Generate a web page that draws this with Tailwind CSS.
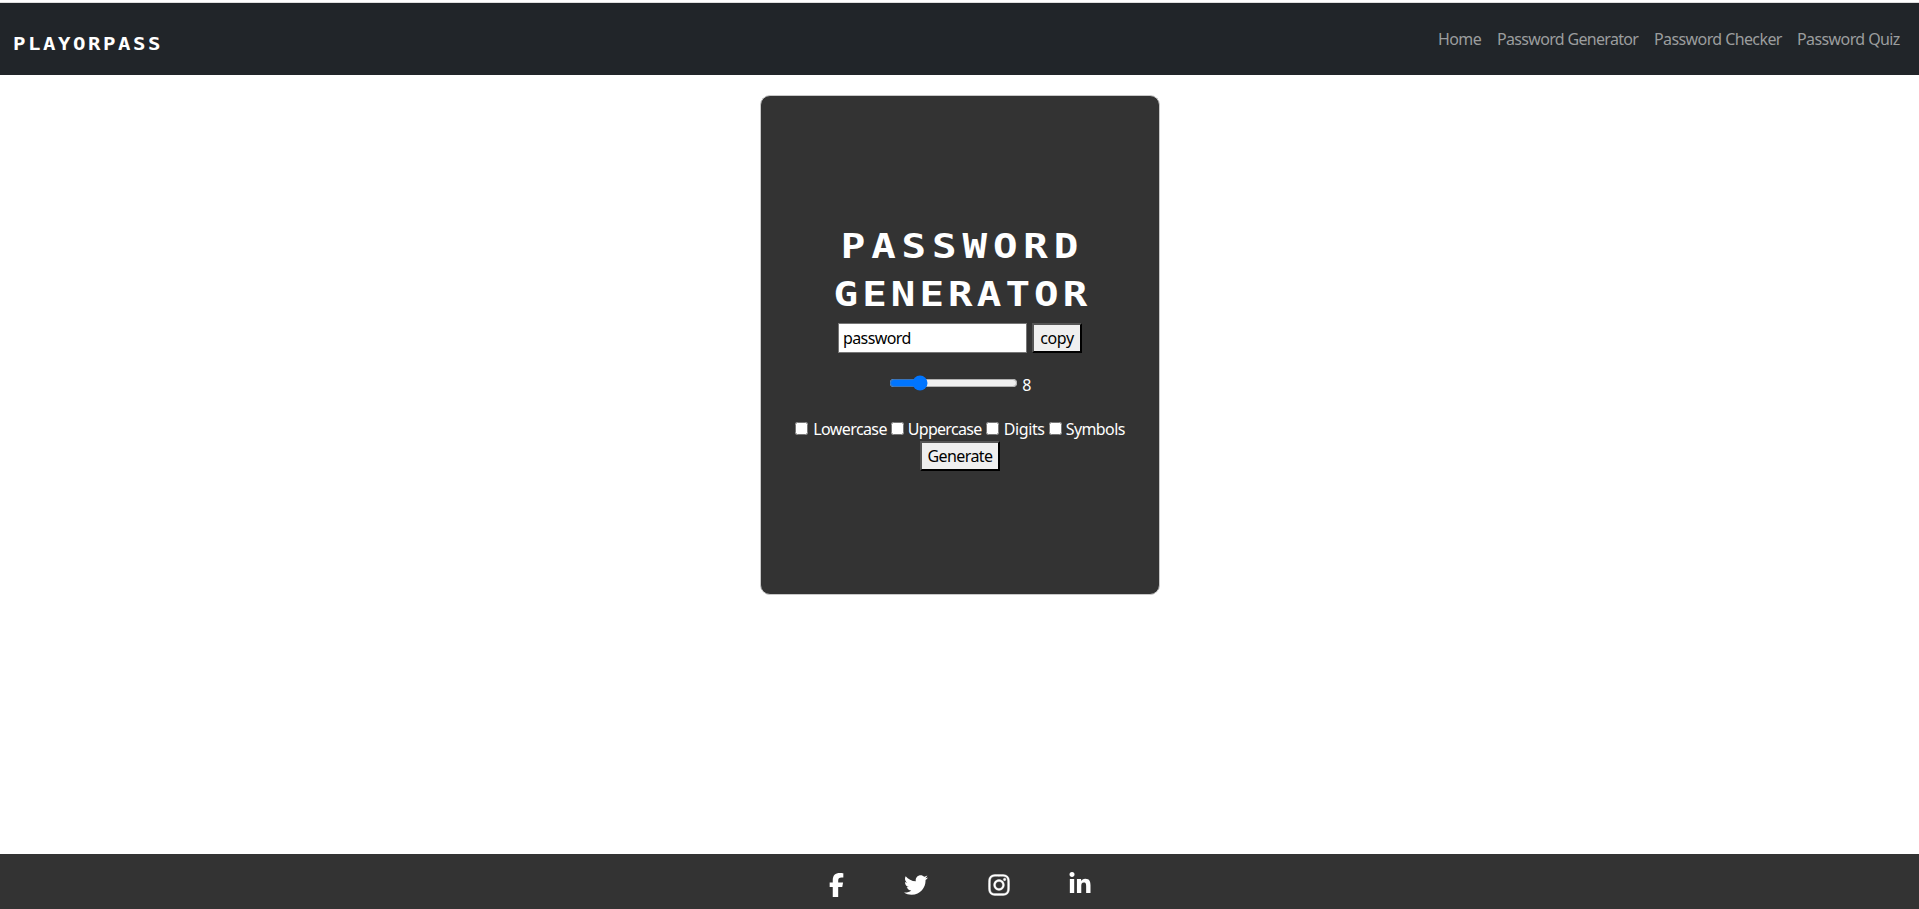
<!DOCTYPE html>
<html lang="en">
<head>
<meta charset="utf-8">
<title>PlayOrPass</title>
<script src="https://cdn.jsdelivr.net/npm/@tailwindcss/browser@4"></script>
</head>
<body class="flex h-screen flex-col overflow-hidden bg-white pt-[2px] font-['Noto_Sans',sans-serif] text-[16px] leading-6 tracking-[-0.6px]">
<nav class="flex h-[73px] shrink-0 items-start justify-between border-t border-[#dedede] bg-[#212529] pl-[13px] pr-[18px]">
  <a class="mt-[29px] origin-left scale-x-[1.15] font-['DejaVu_Sans_Mono',monospace] text-[18px] font-bold leading-6 tracking-[2.2px] text-white">PLAYORPASS</a>
  <div class="mt-[24px] flex gap-[15px] whitespace-nowrap text-[#9b9d9e]">
    <a class="-ml-[1px] w-[44px]">Home</a>
    <a class="w-[142px] tracking-[-0.68px]">Password Generator</a>
    <a class="w-[128px]">Password Checker</a>
    <a class="w-[104px]">Password Quiz</a>
  </div>
</nav>
<main class="flex flex-1 justify-center pt-5">
  <section class="ml-[1px] flex h-[500px] w-[400px] flex-col items-center rounded-[10px] border border-[#c8c8c8] bg-[#333] pt-[126px] text-white">
    <h1 class="flex flex-col items-center whitespace-nowrap font-['DejaVu_Sans_Mono',monospace] text-[34px] font-bold leading-[48px]">
      <span class="-mr-[5px] scale-x-[1.2] tracking-[4.9px]">PASSWORD</span>
      <span class="-mr-[4px] scale-x-[1.2] tracking-[3.4px]">GENERATOR</span>
    </h1>
    <div class="mt-[5px] flex h-[30px] gap-[5px] text-black">
      <input type="text" value="password" class="w-[189px] border border-[#767676] bg-white px-[4px]">
      <button class="w-[50px] border-2 border-t-[#555] border-l-[#555] border-r-black border-b-black bg-[#efefef] leading-5 tracking-[-0.4px]">copy</button>
    </div>
    <div class="mt-[20px] flex h-6 items-center gap-[4px]">
      <input type="range" min="0" max="100" value="20" class="mb-[5px] w-[129px]">
      <span>8</span>
    </div>
    <div class="mt-[20px] flex h-6 items-center whitespace-nowrap">
      <input type="checkbox" class="mb-[2px] h-[13px] w-[13px]"><label class="ml-[5px] w-[77.5px]">Lowercase</label>
      <input type="checkbox" class="mb-[2px] h-[13px] w-[13px]"><label class="ml-[4px] w-[78px] tracking-[-0.7px]">Uppercase</label>
      <input type="checkbox" class="mb-[2px] h-[13px] w-[13px]"><label class="ml-[5px] w-[45px] tracking-[-0.4px]">Digits</label>
      <input type="checkbox" class="mb-[2px] h-[13px] w-[13px]"><label class="ml-[4px] w-[59px]">Symbols</label>
    </div>
    <button class="h-[30px] w-[80px] border-2 border-t-[#555] border-l-[#555] border-r-black border-b-black bg-[#efefef] leading-5 text-black">Generate</button>
  </section>
</main>
<footer class="flex h-[55px] shrink-0 items-start justify-center bg-[#333] pt-[19px] text-white">
  <div class="flex items-start gap-[60px] pl-[1px]">
    <svg class="h-6 w-[15px]" viewBox="0 0 320 512" fill="currentColor"><path d="M80 299.3V512h116V299.3h86.5l18-97.8H196v-34.6c0-51.7 20.3-71.5 72.7-71.5 16.3 0 29.4.4 37 1.2V7.9C291.4 4 256.4 0 236.2 0 129.3 0 80 50.5 80 159.4v42.1H14v97.8z"/></svg>
    <svg class="h-6 w-6" viewBox="0 0 512 512" fill="currentColor"><path d="M459.37 151.716c.325 4.548.325 9.097.325 13.645 0 138.72-105.583 298.558-298.558 298.558-59.452 0-114.68-17.219-161.137-47.106 8.447.974 16.568 1.299 25.34 1.299 49.055 0 94.213-16.568 130.274-44.832-46.132-.975-84.792-31.188-98.112-72.772 6.498.974 12.995 1.624 19.818 1.624 9.421 0 18.843-1.3 27.614-3.573-48.081-9.747-84.143-51.98-84.143-102.985v-1.299c13.969 7.797 30.214 12.67 47.431 13.319-28.264-18.843-46.781-51.005-46.781-87.391 0-19.492 5.197-37.36 14.294-52.954 51.655 63.675 129.3 105.258 216.365 109.807-1.624-7.797-2.599-15.918-2.599-24.04 0-57.828 46.782-104.934 104.934-104.934 30.213 0 57.502 12.67 76.67 33.137 23.715-4.548 46.456-13.32 66.599-25.34-7.798 24.366-24.366 44.833-46.132 57.827 21.117-2.273 41.584-8.122 60.426-16.243-14.292 20.791-32.161 39.308-52.628 54.253z"/></svg>
    <svg class="h-6 w-[22px]" viewBox="0 0 448 512" fill="currentColor" stroke="currentColor" stroke-width="8"><path d="M224.1 141c-63.6 0-114.9 51.3-114.9 114.9s51.3 114.9 114.9 114.9S339 319.5 339 255.9 287.7 141 224.1 141zm0 189.6c-41.1 0-74.7-33.5-74.7-74.7s33.5-74.7 74.7-74.7 74.7 33.5 74.7 74.7-33.6 74.7-74.7 74.7zm146.4-194.3c0 14.9-12 26.8-26.8 26.8-14.9 0-26.8-12-26.8-26.8s12-26.8 26.8-26.8 26.8 12 26.8 26.8zm76.1 27.2c-1.7-35.9-9.9-67.7-36.2-93.9-26.2-26.2-58-34.4-93.9-36.2-37-2.1-147.9-2.1-184.9 0-35.8 1.7-67.6 9.9-93.9 36.1s-34.4 58-36.2 93.9c-2.1 37-2.1 147.9 0 184.9 1.7 35.9 9.9 67.7 36.2 93.9s58 34.4 93.9 36.2c37 2.1 147.9 2.1 184.9 0 35.9-1.7 67.7-9.9 93.9-36.2 26.2-26.2 34.4-58 36.2-93.9 2.1-37 2.1-147.8 0-184.8zM398.8 388c-7.8 19.6-22.9 34.7-42.6 42.6-29.5 11.7-99.5 9-132.1 9s-102.7 2.6-132.1-9c-19.6-7.8-34.7-22.9-42.6-42.6-11.7-29.5-9-99.5-9-132.1s-2.6-102.7 9-132.1c7.8-19.6 22.9-34.7 42.6-42.6 29.5-11.7 99.5-9 132.1-9s102.7-2.6 132.1 9c19.6 7.8 34.7 22.9 42.6 42.6 11.7 29.5 9 99.5 9 132.1s2.7 102.7-9 132.1z"/></svg>
    <svg class="-ml-[1px] -mt-[1px] h-6 w-[22px]" viewBox="0 0 448 512" fill="currentColor"><path d="M100.28 448H7.4V148.9h92.88zM53.79 108.1C24.09 108.1 0 83.5 0 53.8a53.79 53.79 0 0 1 107.58 0c0 29.7-24.1 54.3-53.79 54.3zM447.9 448h-92.68V302.4c0-34.7-.7-79.2-48.29-79.2-48.29 0-55.69 37.7-55.69 76.7V448h-92.78V148.9h89.08v40.8h1.3c12.4-23.5 42.69-48.3 87.88-48.3 94 0 111.28 61.9 111.28 142.3V448z"/></svg>
  </div>
</footer>
</body>
</html>
